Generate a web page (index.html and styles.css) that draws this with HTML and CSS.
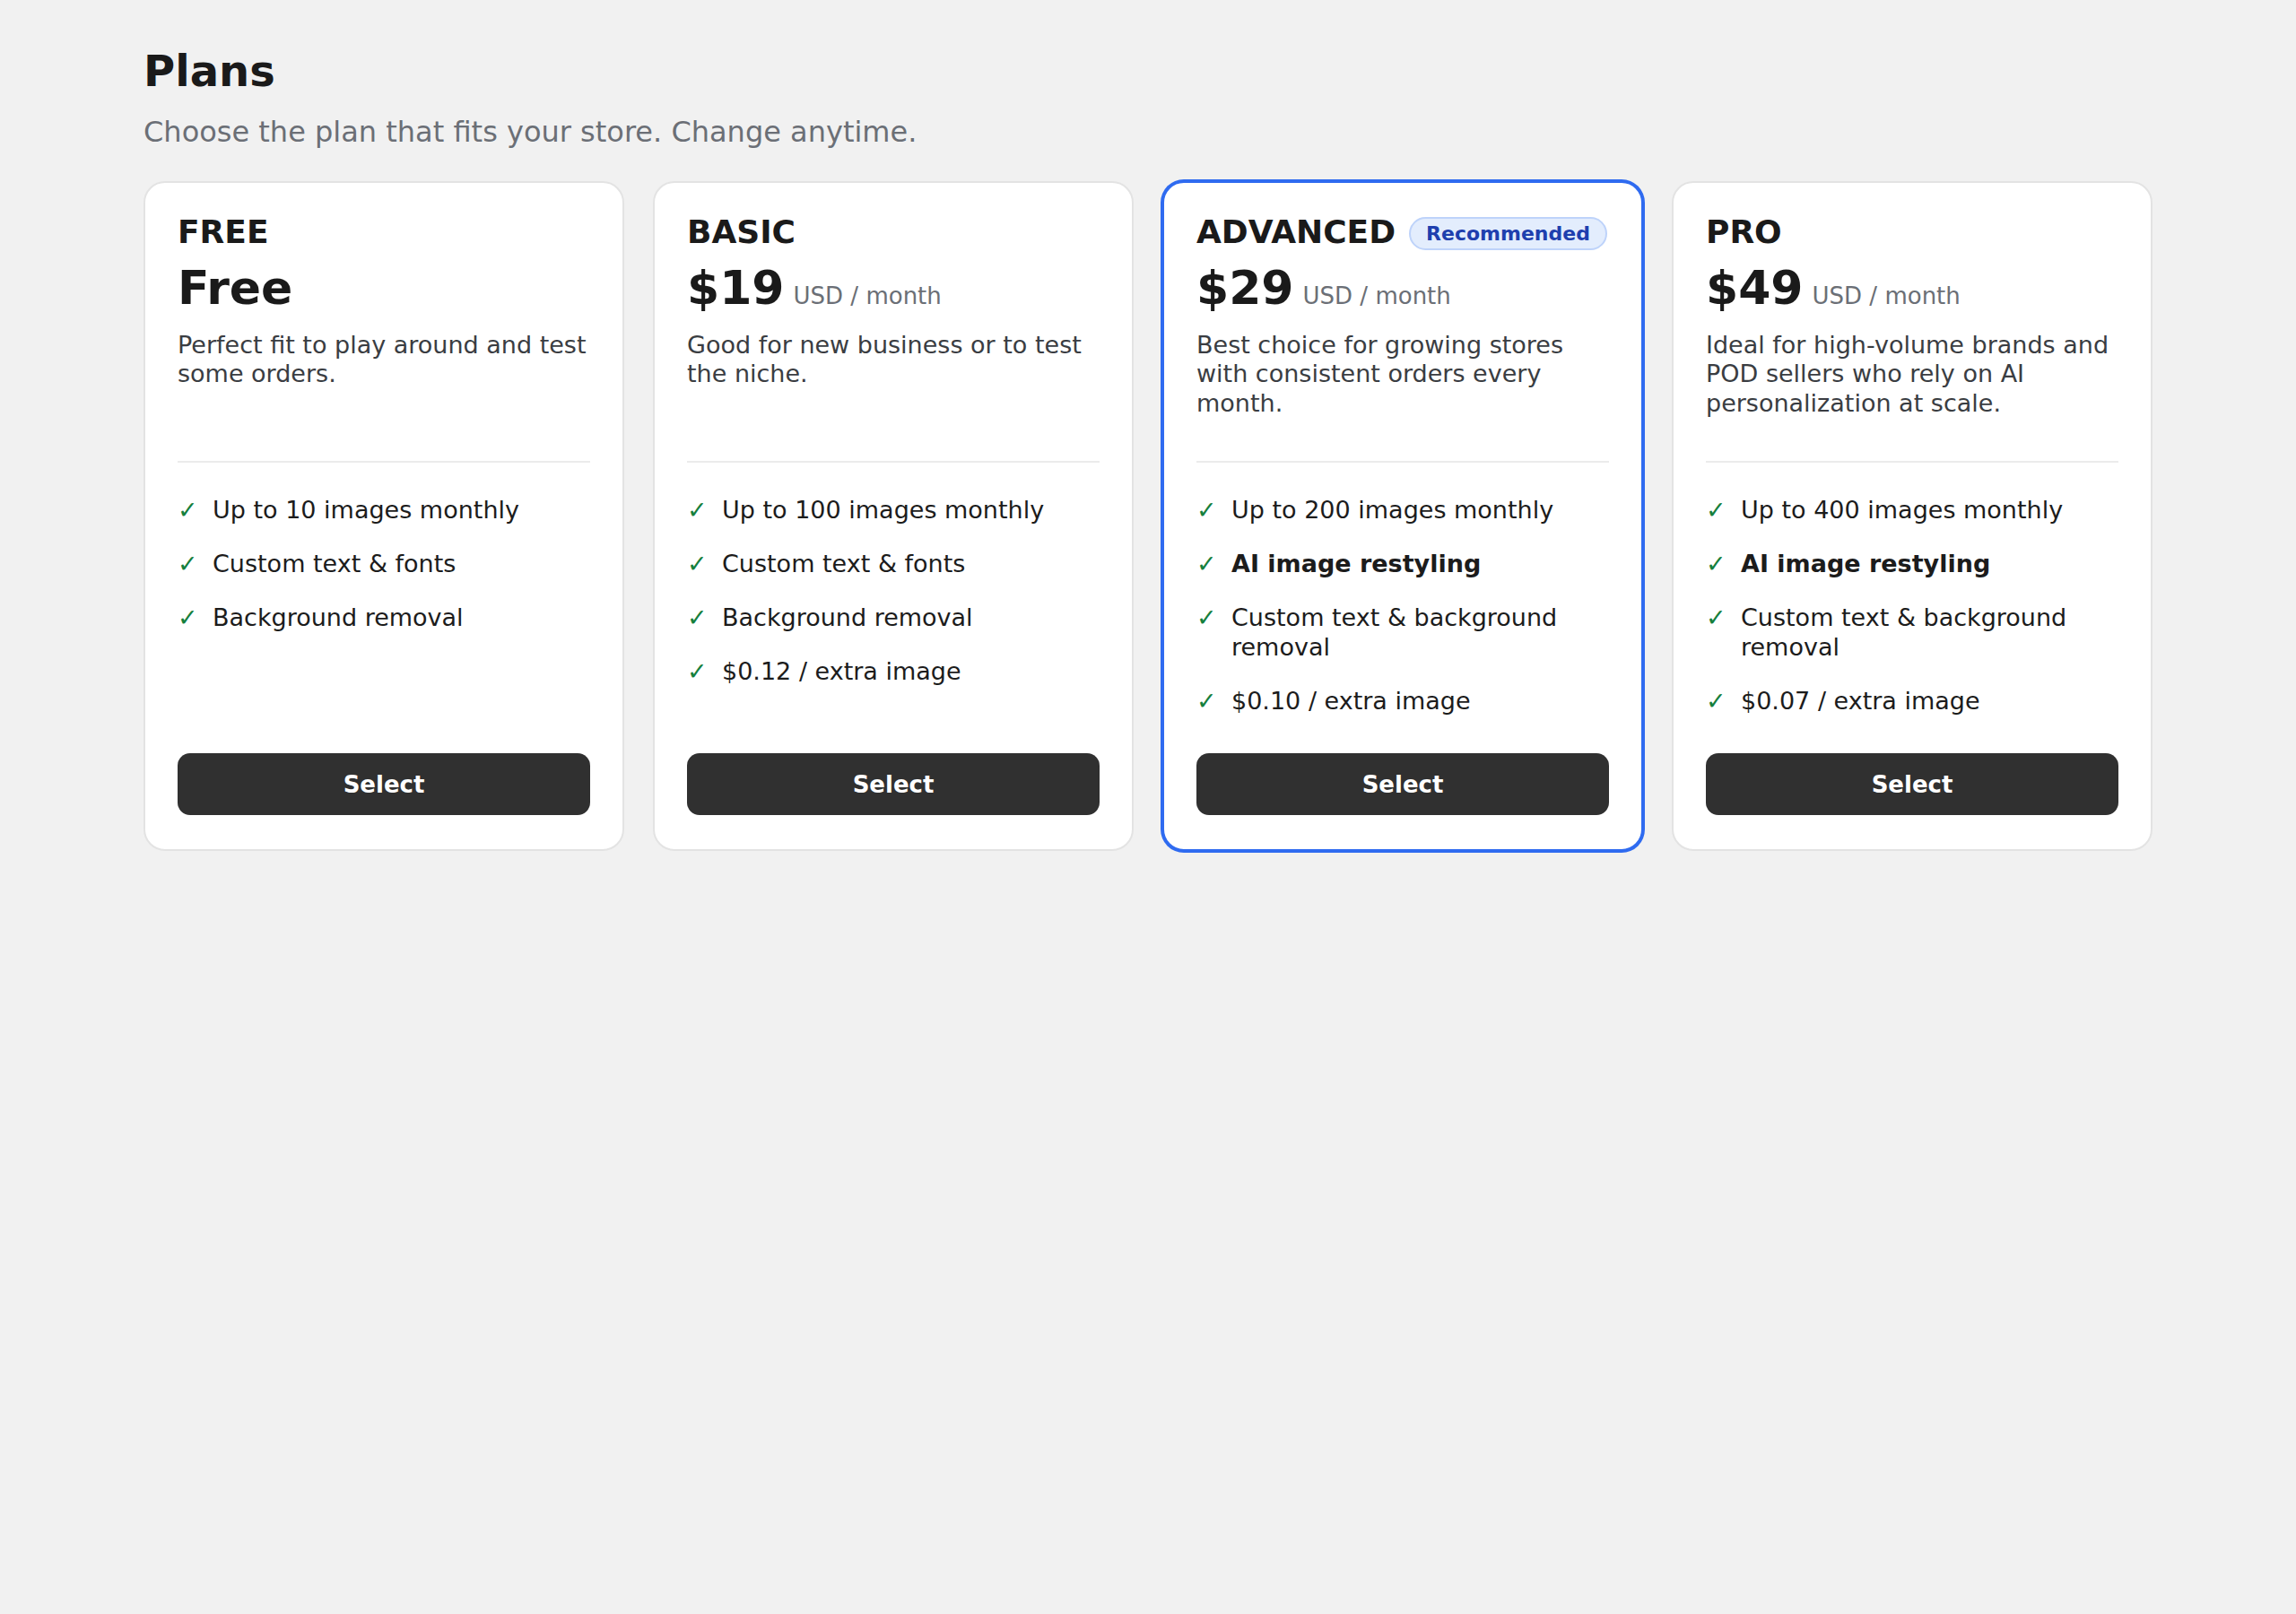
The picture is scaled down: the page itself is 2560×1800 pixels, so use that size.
FILE: index.html
```html
<!DOCTYPE html>
<html lang="en">
<head>
    <meta charset="UTF-8">
    <meta name="viewport" content="width=device-width, initial-scale=1.0">
    <title>Plans</title>
    <link rel="stylesheet" href="styles.css">
</head>
<body>
    <main class="page">
        <h1 class="page-title">Plans</h1>
        <p class="page-subtitle">Choose the plan that fits your store. Change anytime.</p>

        <section class="plans">
            <article class="plan">
                <div class="plan-head">
                    <h2 class="plan-name">FREE</h2>
                </div>
                <div class="plan-price">
                    <span class="amount">Free</span>
                </div>
                <p class="plan-desc">Perfect fit to play around and test some orders.</p>
                <hr class="plan-divider">
                <ul class="features">
                    <li><span class="check">✓</span><span>Up to 10 images monthly</span></li>
                    <li><span class="check">✓</span><span>Custom text &amp; fonts</span></li>
                    <li><span class="check">✓</span><span>Background removal</span></li>
                </ul>
                <button class="select-btn">Select</button>
            </article>

            <article class="plan">
                <div class="plan-head">
                    <h2 class="plan-name">BASIC</h2>
                </div>
                <div class="plan-price">
                    <span class="amount">$19</span>
                    <span class="period">USD / month</span>
                </div>
                <p class="plan-desc">Good for new business or to test the niche.</p>
                <hr class="plan-divider">
                <ul class="features">
                    <li><span class="check">✓</span><span>Up to 100 images monthly</span></li>
                    <li><span class="check">✓</span><span>Custom text &amp; fonts</span></li>
                    <li><span class="check">✓</span><span>Background removal</span></li>
                    <li><span class="check">✓</span><span>$0.12 / extra image</span></li>
                </ul>
                <button class="select-btn">Select</button>
            </article>

            <article class="plan plan-recommended">
                <div class="plan-head">
                    <h2 class="plan-name">ADVANCED</h2>
                    <span class="badge">Recommended</span>
                </div>
                <div class="plan-price">
                    <span class="amount">$29</span>
                    <span class="period">USD / month</span>
                </div>
                <p class="plan-desc">Best choice for growing stores with consistent orders every month.</p>
                <hr class="plan-divider">
                <ul class="features">
                    <li><span class="check">✓</span><span>Up to 200 images monthly</span></li>
                    <li><span class="check">✓</span><strong>AI image restyling</strong></li>
                    <li><span class="check">✓</span><span>Custom text &amp; background removal</span></li>
                    <li><span class="check">✓</span><span>$0.10 / extra image</span></li>
                </ul>
                <button class="select-btn">Select</button>
            </article>

            <article class="plan">
                <div class="plan-head">
                    <h2 class="plan-name">PRO</h2>
                </div>
                <div class="plan-price">
                    <span class="amount">$49</span>
                    <span class="period">USD / month</span>
                </div>
                <p class="plan-desc">Ideal for high-volume brands and POD sellers who rely on AI personalization at scale.</p>
                <hr class="plan-divider">
                <ul class="features">
                    <li><span class="check">✓</span><span>Up to 400 images monthly</span></li>
                    <li><span class="check">✓</span><strong>AI image restyling</strong></li>
                    <li><span class="check">✓</span><span>Custom text &amp; background removal</span></li>
                    <li><span class="check">✓</span><span>$0.07 / extra image</span></li>
                </ul>
                <button class="select-btn">Select</button>
            </article>
        </section>
    </main>
</body>
</html>
```

FILE: styles.css
```css
:root {
    --bg-color: #f1f1f1;
    --card-bg: #fff;
    --card-border: #e3e3e3;
    --text-color: #1a1a1a;
    --muted-color: #6b6f76;
    --desc-color: #3a3d42;
    --accent-color: #2f6bf0;
    --check-color: #15803d;
    --button-color: #303030;
}

* {
    margin: 0;
    padding: 0;
    box-sizing: border-box;
}

body {
    font-family: "DejaVu Sans", "Noto Sans", sans-serif;
    color: var(--text-color);
    background-color: var(--bg-color);
    min-height: 100vh;
}

.page {
    padding: 51px 160px 80px;
}

.page-title {
    font-size: 48px;
    font-weight: 700;
    line-height: normal;
}

.page-subtitle {
    margin-top: 21px;
    font-size: 32px;
    line-height: normal;
    color: var(--muted-color);
}

.plans {
    display: grid;
    grid-template-columns: repeat(4, 1fr);
    gap: 32px;
    margin-top: 36px;
    align-items: stretch;
}

.plan {
    display: flex;
    flex-direction: column;
    background: var(--card-bg);
    border: 2px solid var(--card-border);
    border-radius: 24px;
    padding: 34px 36px 38px;
}

.plan-recommended {
    border-color: var(--accent-color);
    box-shadow: 0 0 0 2px var(--accent-color);
}

.plan-head {
    display: flex;
    align-items: center;
    gap: 15px;
}

.plan-name {
    font-size: 36px;
    font-weight: 700;
    line-height: normal;
}

.badge {
    font-size: 22px;
    font-weight: 700;
    line-height: normal;
    color: #1e3fae;
    background: #e3edfd;
    border: 2px solid #bed3fa;
    border-radius: 999px;
    padding: 4px 17px;
    margin-top: 4px;
}

.plan-price {
    display: flex;
    align-items: baseline;
    gap: 10px;
    margin-top: 12px;
}

.amount {
    font-size: 52px;
    font-weight: 700;
    line-height: normal;
}

.period {
    font-size: 26px;
    color: var(--muted-color);
}

.plan-desc {
    margin-top: 18px;
    font-size: 27px;
    line-height: 1.2;
    min-height: 3.6em;
    color: var(--desc-color);
}

.plan-divider {
    border: none;
    height: 2px;
    background-color: #ebebeb;
    margin: 48px 0 37px;
}

.features {
    list-style: none;
    display: flex;
    flex-direction: column;
    gap: 27.6px;
    margin-bottom: 42px;
}

.features li {
    display: grid;
    grid-template-columns: 22px 1fr;
    column-gap: 17px;
    font-size: 27px;
    line-height: 1.2;
    color: #1c1c1c;
}

.check {
    color: var(--check-color);
    font-size: 27px;
}

.features strong {
    font-weight: 700;
}

.select-btn {
    margin-top: auto;
    width: 100%;
    background-color: var(--button-color);
    color: #fff;
    border: none;
    border-radius: 14px;
    padding: 20px 0 19px;
    font-family: inherit;
    font-size: 26px;
    font-weight: 700;
    line-height: normal;
    cursor: pointer;
}
```
